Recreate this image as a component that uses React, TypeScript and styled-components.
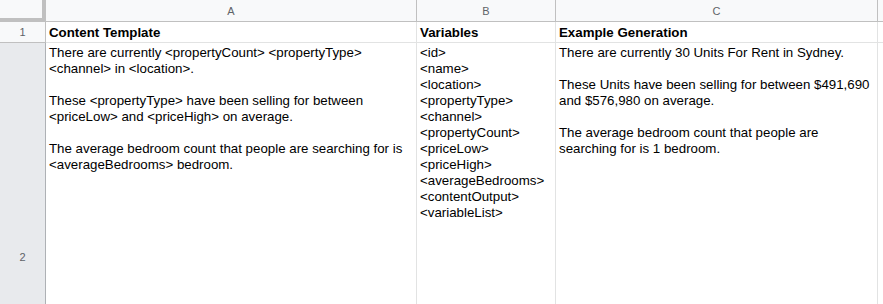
import styled, { createGlobalStyle } from "styled-components";

const GlobalStyle = createGlobalStyle`
  html, body {
    margin: 0;
    padding: 0;
    overflow: hidden;
    background: #ffffff;
  }
  body {
    font-family: "Liberation Sans", Arial, sans-serif;
  }
`;

const Sheet = styled.div`
  display: grid;
  grid-template-columns: 46px 371px 139px 322px 1fr;
  grid-template-rows: 22px 21px 428px;
  width: 883px;
  height: 304px;
  overflow: hidden;
`;

const Corner = styled.div`
  background: #f8f9fa;
  border-right: 4px solid #c0c0c0;
  border-bottom: 4px solid #c0c0c0;
  box-sizing: border-box;
  width: 46px;
  height: 22px;
`;

const ColHeader = styled.div`
  background: #f8f9fa;
  border-right: 1px solid #c0c0c0;
  border-bottom: 1px solid #c0c0c0;
  box-sizing: border-box;
  display: flex;
  align-items: center;
  justify-content: center;
  font-size: 11px;
  color: #5f6368;
`;

const RowHeader = styled.div<{ $active?: boolean }>`
  background: ${(p) => (p.$active ? "#e8eaed" : "#f8f9fa")};
  border-right: 1px solid ${(p) => (p.$active ? "#aeb1b5" : "#c0c0c0")};
  border-bottom: 1px solid #c0c0c0;
  box-sizing: border-box;
  display: flex;
  align-items: center;
  justify-content: center;
  font-size: 11px;
  color: #5f6368;
`;

const Cell = styled.div<{ $bold?: boolean }>`
  border-right: 1px solid #e2e3e3;
  border-bottom: 1px solid #e2e3e3;
  box-sizing: border-box;
  padding: ${(p) => (p.$bold ? "3px 3px 0 3px" : "2px 3px 0 3px")};
  font-size: 13.3px;
  line-height: 16px;
  font-weight: ${(p) => (p.$bold ? 700 : 400)};
  color: #000000;
  white-space: pre;
  overflow: hidden;
`;

const template = `There are currently <propertyCount> <propertyType>
<channel> in <location>.

These <propertyType> have been selling for between
<priceLow> and <priceHigh> on average.

The average bedroom count that people are searching for is
<averageBedrooms> bedroom.`;

const variables = [
  "<id>",
  "<name>",
  "<location>",
  "<propertyType>",
  "<channel>",
  "<propertyCount>",
  "<priceLow>",
  "<priceHigh>",
  "<averageBedrooms>",
  "<contentOutput>",
  "<variableList>",
];

const example = `There are currently 30 Units For Rent in Sydney.

These Units have been selling for between $491,690
and $576,980 on average.

The average bedroom count that people are
searching for is 1 bedroom.`;

export default function App(): JSX.Element {
  return (
    <>
      <GlobalStyle />
      <Sheet>
        <Corner />
        <ColHeader>A</ColHeader>
        <ColHeader>B</ColHeader>
        <ColHeader>C</ColHeader>
        <ColHeader />

        <RowHeader>1</RowHeader>
        <Cell $bold>Content Template</Cell>
        <Cell $bold>Variables</Cell>
        <Cell $bold>Example Generation</Cell>
        <Cell />

        <RowHeader $active>2</RowHeader>
        <Cell>{template}</Cell>
        <Cell>{variables.join("\n")}</Cell>
        <Cell>{example}</Cell>
        <Cell />
      </Sheet>
    </>
  );
}
